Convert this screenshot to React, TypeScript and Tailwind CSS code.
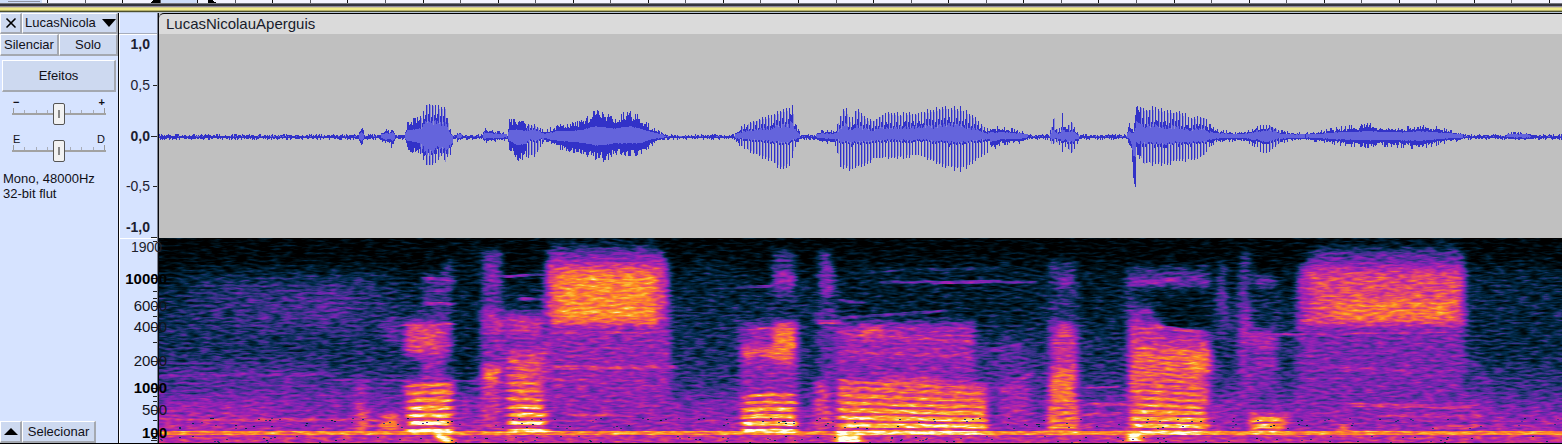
import React from "react";
import { X } from "lucide-react";

type Key = [number, number, number];

/* Waveform envelope: x, height above zero, depth below zero */
const ENVELOPE: Key[] = [
  [159, 2, 2], [350, 2, 2], [358, 3, 3], [361, 10, 12], [364, 3, 3], [380, 3, 3], [385, 7, 8], [389, 5, 6],
  [392, 10, 12], [395, 3, 3], [404, 3, 3], [407, 14, 12], [415, 17, 16], [421, 20, 18], [424, 26, 26],
  [426, 34, 32], [432, 34, 31], [436, 30, 25], [442, 30, 20], [445, 30, 28], [448, 14, 20], [451, 3, 19],
  [453, 2, 6], [460, 4, 3], [464, 2, 2], [482, 2, 2], [484, 8, 6], [500, 4, 4], [507, 3, 3], [509, 16, 12],
  [516, 16, 22], [527, 12, 21], [535, 11, 20], [541, 7, 10], [545, 5, 5], [557, 12, 11], [570, 12, 14],
  [582, 15, 16], [595, 25, 23], [603, 22, 23], [615, 18, 18], [629, 25, 18], [640, 18, 18], [650, 10, 9],
  [660, 4, 4], [670, 1, 1], [733, 2, 2], [740, 9, 9], [746, 12, 14], [760, 18, 21], [770, 20, 24],
  [780, 26, 34], [789, 28, 30], [791, 34, 25], [794, 20, 12], [797, 8, 5], [800, 3, 3], [815, 3, 3],
  [822, 6, 5], [834, 5, 8], [838, 14, 20], [841, 22, 34], [845, 30, 30], [850, 16, 36], [857, 30, 32],
  [863, 20, 30], [870, 16, 26], [875, 17, 24], [885, 25, 23], [900, 22, 22], [917, 24, 20], [930, 26, 24],
  [945, 30, 32], [960, 28, 34], [966, 25, 32], [975, 18, 24], [985, 8, 18], [1000, 9, 8], [1012, 7, 7],
  [1022, 5, 6], [1030, 2, 2], [1049, 2, 2], [1051, 10, 9], [1054, 20, 8], [1056, 8, 7], [1060, 8, 10],
  [1062, 23, 16], [1065, 10, 12], [1072, 14, 17], [1076, 5, 10], [1080, 2, 2], [1126, 2, 2], [1129, 12, 8],
  [1131, 8, 18], [1133, 5, 53], [1135, 20, 53], [1136, 37, 15], [1139, 33, 20], [1144, 28, 30],
  [1155, 29, 28], [1165, 26, 30], [1178, 25, 25], [1191, 19, 25], [1205, 20, 20], [1211, 9, 8],
  [1219, 6, 5], [1236, 4, 4], [1246, 5, 5], [1256, 10, 10], [1262, 11, 17], [1270, 11, 15], [1278, 6, 8],
  [1288, 4, 4], [1305, 3, 3], [1320, 5, 5], [1340, 9, 8], [1352, 10, 9], [1368, 12, 10], [1383, 10, 9],
  [1402, 9, 10], [1420, 11, 12], [1436, 9, 8], [1452, 5, 5], [1468, 2, 2], [1500, 2, 2], [1512, 4, 3],
  [1530, 3, 3], [1540, 2, 2], [1562, 2, 2],
];

/* Spans where single pitch periods are visible: start, end, core above, core below */
const VOICED: [number, number, number, number][] = [
  [420, 453, 0.5, 0.6], [527, 542, 0.6, 0.25], [740, 795, 0.45, 0.25], [836, 990, 0.42, 0.22],
  [1050, 1078, 0.4, 0.4], [1140, 1210, 0.4, 0.3], [1256, 1280, 0.6, 0.35],
];

function makeRandom(seed: number) {
  let s = seed;
  return () => {
    s = (s * 1664525 + 1013904223) % 4294967296;
    return s / 4294967296;
  };
}

function envelopeAt(x: number): [number, number] {
  for (let i = 1; i < ENVELOPE.length; i++) {
    if (x <= ENVELOPE[i][0]) {
      const a = ENVELOPE[i - 1];
      const b = ENVELOPE[i];
      const t = (x - a[0]) / (b[0] - a[0]);
      return [a[1] + (b[1] - a[1]) * t, a[2] + (b[2] - a[2]) * t];
    }
  }
  return [2, 2];
}

function buildWave() {
  const rnd = makeRandom(7);
  let peaks = "";
  let spikes = "";
  let core = "";
  for (let x = 159; x < 1562; x++) {
    const [u, d] = envelopeAt(x);
    const span = VOICED.find((v) => x >= v[0] && x < v[1]);
    const up = u * (0.66 + rnd() * 0.4);
    const down = d * (0.66 + rnd() * 0.4);
    const c = x + 0.5;
    if (span) {
      const iu = Math.round(up * span[2]);
      const id = Math.round(down * span[3]);
      const mid = Math.round(up * (span[2] + 0.22));
      peaks += `M${c} ${136 - mid}V${137 + Math.round(id * 1.2)}`;
      core += `M${c} ${136 - iu}V${136 + id}`;
      if (x % 3 === 0) {
        const k = 0.9 + rnd() * 0.16;
        peaks += `M${c} ${136 - Math.round(u * k)}V${136 + Math.round(d * k)}`;
      }
      if (x % 3 === 1 && rnd() > 0.3) spikes += `M${c} ${136 - Math.round(u * 0.9)}V${136 + Math.round(d * 0.92)}`;
    } else if (u <= 3) {
      const top = rnd() * u > 0.7 ? (rnd() > 0.75 ? 2 : 1) : 0;
      const bottom = rnd() * d > 0.9 ? (rnd() > 0.75 ? 3 : 2) : 1;
      peaks += `M${c} ${136 - top}V${137 + bottom - (top > 0 ? 0 : 0)}`;
      if (rnd() > 0.75) core += `M${c} 136V137`;
    } else {
      const small = u < 11;
      const top = Math.round(rnd() > 0.8 ? u * 1.08 : up * (small ? 0.8 : 1));
      const bottom = Math.round(rnd() > 0.8 ? d * 1.08 : down * (small ? 0.8 : 1));
      peaks += `M${c} ${136 - top}V${137 + bottom}`;
      core += `M${c} ${136 - Math.round(u * 0.38 + rnd() * 0.8)}V${136 + Math.round(d * 0.38 + rnd() * 0.8)}`;
    }
  }
  return { peaks, spikes, core };
}

const WAVE = buildWave();

const gray = (v: number) => {
  const n = Math.round(v * 255);
  return `rgb(${n},${n},${n})`;
};

/* Spectral energy patches: x, y, width, height, level */
type Patch = [number, number, number, number, number];

const WIDE: Patch[] = [
  [190, 275, 200, 60, 0.26], [240, 290, 110, 40, 0.3], [312, 290, 32, 34, 0.37], [170, 366, 150, 18, 0.38],
  [453, 240, 27, 140, 0.1], [690, 260, 45, 60, 0.17], [800, 300, 20, 80, 0.2], [835, 264, 210, 60, 0.13],
  [1080, 270, 42, 60, 0.12], [1470, 268, 92, 90, 0.17], [240, 392, 160, 30, 0.42], [159, 400, 120, 30, 0.5],
  [455, 395, 30, 35, 0.48], [675, 405, 60, 25, 0.46], [985, 345, 50, 80, 0.36], [1212, 400, 40, 30, 0.48],
  [1290, 400, 200, 30, 0.47],
];

const REGIONS: Patch[] = [
  [355, 378, 12, 54, 0.5], [356, 410, 11, 22, 0.78], [386, 318, 12, 24, 0.42], [379, 414, 20, 18, 0.78],
  [404, 320, 48, 36, 0.54], [406, 326, 34, 28, 0.65], [422, 274, 30, 48, 0.3], [444, 262, 9, 30, 0.36],
  [420, 356, 26, 26, 0.45], [405, 380, 48, 52, 0.58], [421, 382, 28, 50, 0.7],
  [482, 250, 20, 56, 0.36], [486, 268, 12, 16, 0.48], [481, 308, 22, 26, 0.55], [481, 334, 64, 96, 0.44],
  [481, 366, 20, 18, 0.74], [481, 384, 20, 46, 0.58], [505, 314, 38, 20, 0.57], [510, 350, 36, 80, 0.62],
  [548, 238, 106, 12, 0.14], [546, 249, 119, 20, 0.42], [545, 330, 126, 104, 0.47], [545, 262, 124, 66, 0.58],
  [552, 268, 106, 57, 0.72], [562, 276, 90, 44, 0.79],
  [772, 250, 24, 50, 0.3], [774, 272, 22, 16, 0.5], [740, 324, 34, 12, 0.48], [740, 336, 58, 60, 0.46],
  [740, 347, 34, 11, 0.7], [773, 322, 24, 40, 0.76], [786, 356, 10, 12, 0.66], [742, 394, 54, 38, 0.58],
  [819, 250, 12, 50, 0.36], [819, 268, 16, 28, 0.44], [818, 306, 20, 75, 0.36], [815, 382, 16, 48, 0.62],
  [836, 322, 140, 62, 0.45], [838, 325, 132, 18, 0.5], [862, 326, 22, 12, 0.7], [840, 348, 130, 10, 0.52],
  [838, 384, 150, 48, 0.67], [880, 378, 60, 20, 0.68], [1000, 384, 30, 44, 0.5],
  [1048, 260, 28, 58, 0.26], [1058, 274, 18, 12, 0.42], [1050, 322, 28, 50, 0.58], [1049, 370, 28, 62, 0.74],
  [1126, 266, 84, 14, 0.28], [1126, 277, 84, 10, 0.42], [1152, 290, 60, 38, 0.1], [1126, 290, 8, 20, 0.3],
  [1128, 306, 26, 20, 0.4], [1128, 322, 36, 110, 0.58], [1160, 332, 50, 100, 0.56], [1134, 350, 78, 24, 0.78],
  [1130, 374, 78, 58, 0.66],
  [1218, 262, 9, 80, 0.32], [1219, 290, 9, 20, 0.42], [1240, 250, 9, 50, 0.36], [1238, 300, 12, 130, 0.45],
  [1240, 318, 10, 28, 0.54], [1252, 276, 24, 10, 0.42], [1252, 330, 26, 24, 0.52], [1252, 358, 24, 8, 0.56],
  [1250, 366, 28, 50, 0.4], [1250, 414, 34, 18, 0.76],
  [1316, 240, 142, 10, 0.12], [1308, 250, 156, 18, 0.36], [1296, 326, 170, 76, 0.42], [1298, 264, 168, 62, 0.53],
  [1312, 272, 150, 52, 0.65], [1334, 300, 122, 22, 0.75],
];

/* Thin streaks: x1, y1, x2, y2, level, thickness */
type Streak = [number, number, number, number, number, number];

const STREAKS: Streak[] = [
  [424, 278, 452, 280, 0.46, 3], [424, 303, 452, 304, 0.5, 3], [430, 291, 452, 290, 0.38, 3],
  [404, 325, 454, 324, 0.6, 2], [500, 277, 545, 274, 0.38, 3], [520, 299, 545, 299, 0.46, 3],
  [575, 279, 650, 280, 0.85, 2], [560, 312, 650, 313, 0.86, 3], [552, 333, 668, 332, 0.56, 3],
  [550, 368, 675, 367, 0.6, 4], [550, 380, 600, 380, 0.56, 3], [570, 415, 615, 415, 0.64, 3],
  [740, 287, 790, 286, 0.36, 3], [742, 330, 796, 326, 0.6, 2], [820, 322, 838, 322, 0.58, 4],
  [836, 300, 866, 303, 0.34, 3], [838, 318, 944, 311, 0.36, 3], [880, 282, 1040, 282, 0.36, 3],
  [930, 283, 1000, 281, 0.44, 3], [860, 272, 1000, 268, 0.22, 3], [1002, 268, 1010, 275, 0.2, 3],
  [840, 334, 972, 342, 0.6, 3], [845, 352, 972, 356, 0.56, 3], [985, 352, 1020, 345, 0.4, 5],
  [1000, 392, 1030, 374, 0.54, 5], [1082, 388, 1120, 387, 0.56, 2], [1082, 404, 1125, 404, 0.6, 3],
  [1082, 415, 1125, 413, 0.58, 3], [1130, 284, 1180, 279, 0.48, 4], [1132, 312, 1152, 312, 0.46, 3],
  [1150, 326, 1206, 333, 0.58, 4], [1248, 335, 1460, 332, 0.53, 2], [1300, 320, 1320, 322, 0.68, 3],
  [1350, 405, 1480, 407, 0.6, 4], [1380, 416, 1490, 416, 0.58, 3], [1320, 366, 1420, 372, 0.5, 4],
  [1470, 360, 1488, 386, 0.4, 6], [159, 420, 400, 420, 0.62, 3], [159, 376, 330, 374, 0.42, 3],
  [330, 380, 480, 381, 0.44, 2], [620, 420, 735, 422, 0.5, 3], [1430, 428, 1480, 426, 0.6, 4],
  [159, 428, 240, 427, 0.55, 3], [1344, 424, 1344, 436, 0.84, 8],
];

/* Harmonic stacks: x1, x2, first y, spacing, count, left shift, top level */
type Stack = [number, number, number, number, number, number, number];

const STACKS: Stack[] = [
  [407, 452, 431, 7.8, 7, 1, 1], [508, 548, 431, 8, 10, 0, 0.98], [742, 796, 431, 7.3, 6, 1, 0.98],
  [838, 988, 433, 6.7, 8, -2, 0.96], [1050, 1078, 433, 6.6, 6, 1, 0.84], [1132, 1208, 433, 6.6, 14, -1, 0.96],
  [1252, 1282, 433, 6.8, 3, 1, 0.92],
];

function harmonics() {
  const out: { d: string; v: number; w: number }[] = [];
  STACKS.forEach(([x1, x2, y, gap, count, shift, level]) => {
    for (let i = 0; i < count; i++) {
      const cy = y - gap * i + (i > 6 ? (i - 6) * 0.8 : 0);
      const v = Math.max(0.72, level - i * 0.035);
      const trim = count > 7 ? i * 1.5 : 0;
      const m = x1 + (x2 - x1) * 0.35;
      out.push({
        d: `M${x1} ${cy + shift * i * 0.5}Q${m} ${cy - 1} ${x2 - trim} ${cy + i * 0.2}`,
        v,
        w: i < 4 ? 4.2 : 3,
      });
      if (i > 0) {
        out.push({ d: `M${x1} ${cy + gap / 2 + shift * i * 0.5}Q${m} ${cy + gap / 2 - 1} ${x2 - trim} ${cy + gap / 2}`, v: 0.6, w: 1.5 });
      }
    }
  });
  return out;
}

const HARMONICS = harmonics();

function specks() {
  const rnd = makeRandom(23);
  let d = "";
  for (let i = 0; i < 360; i++) {
    const x = 160 + Math.floor(rnd() * 1400);
    const y = 418 + Math.floor(rnd() * 25);
    if (y > 428 && y < 436) continue;
    d += `M${x} ${y + 0.5}h2`;
  }
  return d;
}

const SPECKS = specks();

const patches = (list: Patch[]) =>
  list.map(([x, y, w, h, v], i) => <rect key={i} x={x} y={y} width={w} height={h} fill={gray(v)} />);

function Spectrogram() {
  return (
    <svg
      role="img"
      aria-label="LucasNicolauAperguis"
      className="block h-[205px] w-full"
      viewBox="159 238 1403 205"
      preserveAspectRatio="none"
    >
      <defs>
        <linearGradient id="floor" x1="0" y1="0" x2="0" y2="1">
          <stop offset="0" stopColor={gray(0.01)} />
          <stop offset="0.12" stopColor={gray(0.03)} />
          <stop offset="0.22" stopColor={gray(0.12)} />
          <stop offset="0.35" stopColor={gray(0.2)} />
          <stop offset="0.6" stopColor={gray(0.23)} />
          <stop offset="0.75" stopColor={gray(0.31)} />
          <stop offset="0.84" stopColor={gray(0.42)} />
          <stop offset="0.93" stopColor={gray(0.52)} />
          <stop offset="1" stopColor={gray(0.56)} />
        </linearGradient>
        <filter id="soft-wide" filterUnits="userSpaceOnUse" x="100" y="200" width="1520" height="280" colorInterpolationFilters="sRGB">
          <feGaussianBlur stdDeviation="14 10" />
        </filter>
        <filter id="soft" filterUnits="userSpaceOnUse" x="100" y="200" width="1520" height="280" colorInterpolationFilters="sRGB">
          <feGaussianBlur stdDeviation="3.6 3.6" />
        </filter>
        <filter id="soft-line" filterUnits="userSpaceOnUse" x="100" y="200" width="1520" height="280" colorInterpolationFilters="sRGB">
          <feGaussianBlur stdDeviation="3.6 0.7" />
        </filter>
        <filter id="heat" filterUnits="userSpaceOnUse" x="159" y="238" width="1403" height="205" colorInterpolationFilters="sRGB">
          <feTurbulence type="fractalNoise" baseFrequency="0.085 0.4" numOctaves="2" seed="5" result="t" />
          <feColorMatrix in="t" type="matrix" values="1 0 0 0 0  1 0 0 0 0  1 0 0 0 0  0 0 0 0 1" result="n" />
          <feComposite in="SourceGraphic" in2="n" operator="arithmetic" k1="0" k2="1" k3="0.46" k4="-0.23" result="m" />
          <feColorMatrix in="m" type="matrix" values="1 0 0 0 0  0 1 0 0 0  0 0 1 0 0  0 0 0 0 1" />
          <feComponentTransfer>
            <feFuncR type="table" tableValues="0 0 0.01 0.22 0.44 0.63 0.8 0.94 1 0.98 1" />
            <feFuncG type="table" tableValues="0 0.08 0.18 0.2 0.15 0.13 0.19 0.34 0.54 0.77 1" />
            <feFuncB type="table" tableValues="0 0.12 0.31 0.54 0.69 0.71 0.57 0.35 0.13 0.22 0.94" />
          </feComponentTransfer>
        </filter>
      </defs>
      <g filter="url(#heat)">
        <rect x="159" y="238" width="1403" height="205" fill="url(#floor)" />
        <g filter="url(#soft-wide)">{patches(WIDE)}</g>
        <g filter="url(#soft)">{patches(REGIONS)}</g>
        <g filter="url(#soft-line)" fill="none">
          {STREAKS.map(([x1, y1, x2, y2, v, w], i) => (
            <path key={i} d={`M${x1} ${y1}L${x2} ${y2}`} stroke={gray(v)} strokeWidth={w} />
          ))}
        </g>
        <rect x="159" y="435" width="1403" height="8" fill={gray(0.57)} />
        <rect x="159" y="431" width="1403" height="4" fill={gray(0.8)} />
        <g filter="url(#soft-line)" fill="none">
          {HARMONICS.map((h, i) => (
            <path key={i} d={h.d} stroke={gray(h.v)} strokeWidth={h.w} />
          ))}
          <path d="M436 434L452 442" stroke="#fff" strokeWidth="8" />
          <path d="M836 438H862" stroke="#fff" strokeWidth="8" />
          <path d="M1126 437H1142" stroke="#fff" strokeWidth="9" />
        </g>
        <path d={SPECKS} stroke={gray(0.25)} strokeWidth="1" />
      </g>
    </svg>
  );
}

function Waveform() {
  return (
    <svg aria-hidden="true" className="block h-[204px] w-full" viewBox="159 34 1403 204" preserveAspectRatio="none" shapeRendering="crispEdges">
      <path d="M159 136.5H1562" stroke="#303030" />
      <path d={WAVE.peaks} stroke="#3232c8" />
      <path d={WAVE.spikes} stroke="#8c8cd2" />
      <path d={WAVE.core} stroke="#6464dc" />
    </svg>
  );
}

const AMPLITUDES: [string, number, boolean][] = [
  ["1,0", 49, true], ["0,5", 90, false], ["0,0", 141, true], ["-0,5", 191, false], ["-1,0", 232, true],
];

const FREQUENCIES: [string, number, boolean][] = [
  ["10000", 284, true], ["6000", 311, false], ["4000", 332, false], ["2000", 366, false],
  ["1000", 393, true], ["500", 415, false], ["100", 438, true],
];

function VerticalRuler() {
  return (
    <svg
      role="img"
      aria-label="Escala vertical"
      className="relative z-10 block h-[430px] w-[40px] shrink-0 overflow-visible bg-[#d6e3ff]"
      viewBox="119 13 40 430"
      fontFamily="Liberation Sans, Arial, sans-serif"
    >
      <g shapeRendering="crispEdges">
        <path d="M119.5 13V443M119 34.5H157M119 238.5H157" stroke="#fff" />
        <path d="M119 33.5H157" stroke="#a6adbd" />
        <path d="M157 13h1v430h-1z" fill="#7c8290" />
        <path d="M158 13h1v430h-1z" fill="#08080c" />
        <path
          d="M153 85.5h4M151 136.5h6M153 186.5h4M151 237.5h6M153 241.5h4M151 278.5h6M153 291.5h4M153 298.5h4M153 306.5h4M153 316.5h4M151 327.5h6M153 342.5h4M151 361.5h6M151 388.5h6M153 396.5h4M153 401.5h4M151 410.5h6M153 420.5h4M151 433.5h6M153 436.5h4M152 438.5h5M151 440.5h6"
          stroke="#222"
        />
      </g>
      {AMPLITUDES.map(([label, y, bold]) => (
        <text key={label} x="150" y={y} textAnchor="end" fontSize="14" fontWeight={bold ? 700 : 400} fill="#1c2030">
          {label}
        </text>
      ))}
      <text x="131" y="252" fontSize="14" fill="#20222c">1900</text>
      {FREQUENCIES.map(([label, y, bold]) => (
        <text key={label} x="167" y={y} textAnchor="end" fontSize="15" fontWeight={bold ? 700 : 400} fill={bold ? "#000" : "#14141c"}>
          {label}
        </text>
      ))}
    </svg>
  );
}

const RAISED = "border-t border-l border-r-2 border-b-2 border-t-white border-l-white border-r-[#a4a8b0] border-b-[#a4a8b0] bg-[#cdd9f0]";

function Slider({ label, left, right, bold }: { label: string; left: string; right: string; bold?: boolean }) {
  return (
    <div className="relative mx-3 h-[37px]">
      <div className={`flex justify-between px-px text-[11px] leading-[10px] ${bold ? "font-bold" : ""}`}>
        <span>{left}</span>
        <span>{right}</span>
      </div>
      <div aria-hidden="true" className="flex h-[6px] items-end justify-between px-px">
        {[5, 2, 2, 2, 2, 2, 2, 2, 5].map((h, i) => (
          <i key={i} className={h === 5 ? "h-[5px] w-px bg-[#9a9a9a]" : "h-[3px] w-px bg-[#a8acb8]"} />
        ))}
      </div>
      <div aria-hidden="true" className="h-[2px] bg-[#a2a2a2]" />
      <input
        type="range"
        aria-label={label}
        min={-36}
        max={36}
        defaultValue={0}
        className="absolute inset-x-0 top-[6px] h-[22px] w-full appearance-none bg-transparent [&::-webkit-slider-thumb]:h-[22px] [&::-webkit-slider-thumb]:w-[12px] [&::-webkit-slider-thumb]:appearance-none [&::-webkit-slider-thumb]:rounded-[2px] [&::-webkit-slider-thumb]:border [&::-webkit-slider-thumb]:border-[#555] [&::-webkit-slider-thumb]:bg-[linear-gradient(#888,#888)] [&::-webkit-slider-thumb]:bg-[length:2px_8px] [&::-webkit-slider-thumb]:bg-center [&::-webkit-slider-thumb]:bg-no-repeat [&::-webkit-slider-thumb]:bg-[#f2f2f2]"
      />
    </div>
  );
}

function TrackPanel() {
  return (
    <aside className="flex w-[119px] shrink-0 flex-col border-r border-[#08080c] bg-[#d6e3ff] text-[13px] text-[#101018]">
      <div className="flex h-[21px]">
        <button aria-label="Fechar" className={`flex w-[22px] items-center justify-center ${RAISED}`}>
          <X size={16} strokeWidth={2.5} color="#000" />
        </button>
        <button className={`flex min-w-0 flex-1 items-center gap-[6px] whitespace-nowrap pl-[2px] ${RAISED}`}>
          LucasNicola
          <svg width="14" height="8" viewBox="0 0 14 8" className="shrink-0">
            <path d="M0 0H14L7 8Z" fill="#000" />
          </svg>
        </button>
      </div>
      <div className="flex h-[22px]">
        <button className={`w-[59px] ${RAISED}`}>Silenciar</button>
        <button className={`flex-1 ${RAISED}`}>Solo</button>
      </div>
      <button className={`mx-[2px] mt-1 mb-[5px] h-[32px] ${RAISED}`}>Efeitos</button>
      <Slider label="Ganho" left="−" right="+" bold />
      <Slider label="Panorâmica" left="E" right="D" />
      <p className="pl-[3px] leading-[15px] whitespace-nowrap">
        Mono, 48000Hz
        <br />
        32-bit flut
      </p>
      <div className="mt-auto flex h-[22px] w-24">
        <button aria-label="Recolher" className={`flex w-[22px] items-center justify-center ${RAISED}`}>
          <svg width="14" height="7" viewBox="0 0 14 7">
            <path d="M0 7L7 0L14 7Z" fill="#000" />
          </svg>
        </button>
        <button className={`flex-1 ${RAISED}`}>Selecionar</button>
      </div>
    </aside>
  );
}

function TimelineEdge() {
  const ticks = Array.from({ length: 41 }, (_, i) => Math.round(47 + i * 37.55));
  return (
    <svg aria-hidden="true" className="block h-[13px] w-full" viewBox="0 0 1562 13" preserveAspectRatio="none" shapeRendering="crispEdges">
      <path d="M0 0H1562V3H0Z" fill="#f4f4ff" />
      <path d="M0 0H42V3H0ZM160 0H197V3H160Z" fill="#cddcf8" />
      <path d="M8 1.5H40" stroke="#8c92a0" />
      {ticks.map((x, i) => (
        <path key={x} d={`M${x} 0V3`} stroke={i % 2 ? "#55555f" : "#111"} strokeWidth="1" />
      ))}
      <path d="M154 0h6v3h-10zM208 0h4l5 3h-9z" fill="#000" />
      <path d="M0 3.5H1562" stroke="#77777f" />
      <path d="M0 4H1562V6H0Z" fill="#34343e" />
      <path d="M0 6.5H1562" stroke="#8f899f" />
      <path d="M0 7.5H1562" stroke="#cfc98f" />
      <path d="M0 8H1562V10H0Z" fill="#efea86" />
      <path d="M0 10.5H1562" stroke="#b5b068" />
      <path d="M0 11.5H1562" stroke="#4c4f2c" />
      <path d="M0 12.5H1562" stroke="#b8c4d4" />
    </svg>
  );
}

export default function App() {
  return (
    <main className="w-full overflow-hidden bg-[#c0c0c0] font-['Liberation_Sans',Arial,sans-serif]">
      <TimelineEdge />
      <div className="flex border-b border-black">
        <TrackPanel />
        <VerticalRuler />
        <section className="min-w-0 flex-1">
          <h1 className="h-[21px] rounded-tl-[5px] border-t border-black bg-[#dadada] pl-[7px] text-[15px] leading-5 text-[#181c2c]">
            LucasNicolauAperguis
          </h1>
          <Waveform />
          <Spectrogram />
        </section>
      </div>
    </main>
  );
}
